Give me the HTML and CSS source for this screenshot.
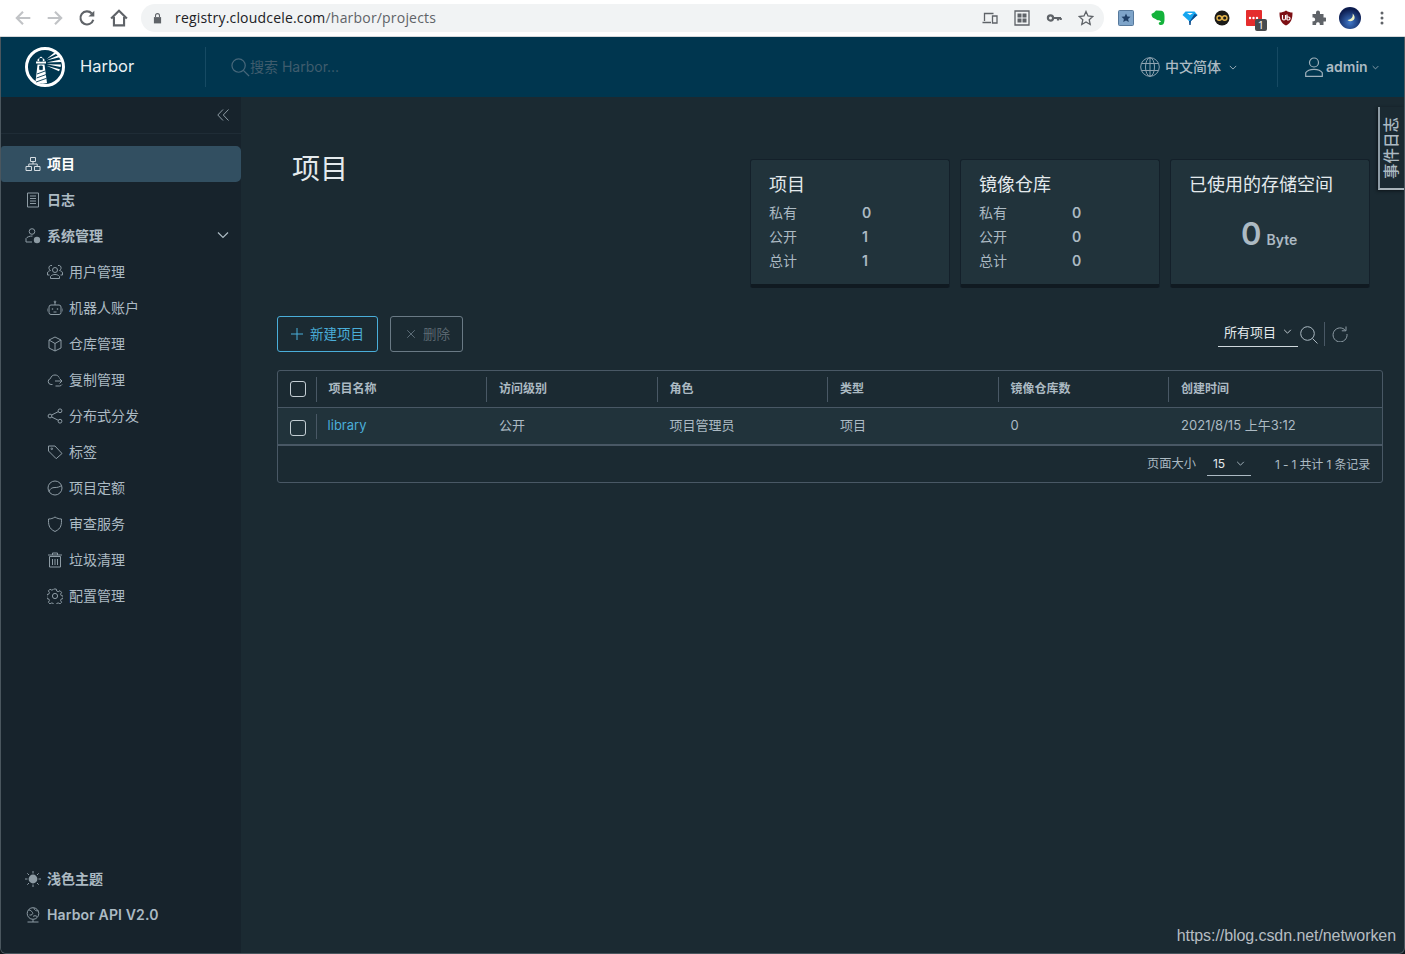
FILE: index.html
```html
<!DOCTYPE html>
<html lang="zh-CN">
<head>
<meta charset="utf-8">
<title>Harbor</title>
<link rel="stylesheet" href="styles.css">
</head>
<body>
<div class="chrome">
  <div class="chrome-nav">
    <svg class="cicon off" viewBox="0 0 16 16"><path d="M14.500 8H2.500M8 2.500 2.500 8 8 13.500"/></svg>
    <svg class="cicon off" viewBox="0 0 16 16"><path d="M1.500 8h12M8 2.500 13.500 8 8 13.500"/></svg>
    <svg class="cicon" viewBox="0 0 16 16"><path d="M13.600 9.500A5.800 5.800 0 1 1 12.300 4"/><path class="solid" d="M14.500 1.500v5.200H9.300z"/></svg>
    <svg class="cicon" viewBox="0 0 16 16"><path d="M1 8.500 8 1.500l7 7M3.500 7v7.500h9V7"/></svg>
  </div>
  <div class="omnibox">
    <svg class="lock" viewBox="0 0 10 12"><path d="M1 5h8v7H1z"/><path class="ring" d="M2.800 5V3.300a2.200 2.200 0 0 1 4.400 0V5"/></svg>
    <span class="url"><b>registry.cloudcele.com</b>/harbor/projects</span>
    <div class="omni-actions">
      <svg class="oicon" viewBox="0 0 16 16"><path d="M2.500 11V3.500h9M.5 12.500h8.500M10.500 6h4.500v7h-4.500z"/></svg>
      <svg class="oicon" viewBox="0 0 16 16"><path d="M1 1h14v14H1z"/><path class="solid" d="M3.500 3.500h4v4h-4zM8.500 3.500h4v4h-4zM3.500 8.500h4v4h-4zM8.500 8.500h4v4h-4z"/></svg>
      <svg class="oicon" viewBox="0 0 16 16"><circle class="key" cx="4.500" cy="8" r="2.600"/><path class="thick" d="M7 8h8M12 8v2.500M14.700 8v2"/></svg>
      <svg class="oicon" viewBox="0 0 16 16"><path d="m8 1.500 2 4.500 4.800.5-3.600 3.200 1 4.800L8 12l-4.200 2.500 1-4.800L1.200 6.500 6 6z"/></svg>
    </div>
  </div>
  <div class="extensions">
    <svg class="ext" viewBox="0 0 16 16"><rect class="e-blue" x=".5" y=".5" width="15" height="15" rx="1"/><path class="e-star" d="m8 3.500 1.300 3 3.200.3-2.400 2.100.7 3.100L8 10.400 5.200 12l.7-3.100L3.500 6.800l3.200-.3z"/></svg>
    <svg class="ext" viewBox="0 0 16 16"><path class="e-green" d="M4.500 2 6 .5l5.500.3c2.500.7 3 3 3 5.700 0 2.500.3 5.500-1 7.500-1.200 1.300-3.500 1.500-4.500.2-.8-1.300.3-2.500 2-2 0-1.500-1.500-2-3-2-1.500-.3-2.500-1.500-4-2-1.500-.5-2.500-2.500-2.500-4 0-.5 1-1 3-2zm3.500 3.500c1 0 1.500.5 2 1.500-1 0-1.500-.5-2-1.500z"/></svg>
    <svg class="ext" viewBox="0 0 16 16"><path class="e-sky" d="M3.500 1.500h9L15.500 5 9 11H7L.5 5z"/><path class="e-navy" d="M7 11h2l-.3 4h-1.400zM9 11l6.500-6-3-1L8 11z"/><path class="e-white" d="M5 3h6L8 5z"/></svg>
    <svg class="ext" viewBox="0 0 16 16"><circle class="e-dark" cx="8" cy="8" r="7.500"/><circle class="e-loop" cx="5.300" cy="8" r="2.300"/><circle class="e-loop" cx="10.700" cy="8" r="2.300"/></svg>
    <span class="ext-badge-wrap">
      <svg class="ext" viewBox="0 0 16 16"><rect class="e-red" width="16" height="16" rx="1"/><circle class="e-white" cx="4" cy="8" r="1.200"/><circle class="e-white" cx="7.500" cy="8" r="1.200"/><circle class="e-white" cx="11" cy="8" r="1.200"/></svg>
      <span class="badge">1</span>
    </span>
    <svg class="ext" viewBox="0 0 16 16"><path class="e-shield" d="M8 .5c2 1.500 4.500 2 6.500 2 0 6-1 10.500-6.500 13C2.500 13 1.500 8.500 1.500 2.500c2 0 4.500-.5 6.500-2z"/><path class="e-ub" d="M4.500 5v3.500a1.500 1.500 0 0 0 3 0V5M9 4.500v5.500M9 7h1.500a1.500 1.500 0 0 1 0 3H9"/></svg>
    <svg class="ext" viewBox="0 0 16 16"><path class="e-puzzle" d="M6 2.500a2 2 0 0 1 4 0V4h3.500v3.500H15a2 2 0 0 1 0 4h-1.500V15H9.800v-1.200a1.900 1.900 0 0 0-3.700 0V15H2.500v-3.700h1.200a1.900 1.900 0 0 0 0-3.700H2.500V4H6z"/></svg>
    <svg class="avatar" viewBox="0 0 22 22"><defs><radialGradient id="night" cx=".5" cy=".7" r=".6"><stop offset="0" stop-color="#3f78c9"/><stop offset="1" stop-color="#0c1c4f"/></radialGradient></defs><circle cx="11" cy="11" r="11" fill="url(#night)"/><path class="e-moon" d="M13.500 6.500c1 3-1 6-5 6.500 2 2 6 1.500 7-1.500.5-2-.5-4-2-5z"/></svg>
    <svg class="dots" viewBox="0 0 4 16"><circle cx="2" cy="3" r="1.500"/><circle cx="2" cy="8" r="1.500"/><circle cx="2" cy="13" r="1.500"/></svg>
  </div>
</div>

<div class="app">
  <header class="top">
    <div class="brand">
      <svg class="logo" viewBox="0 0 40 40">
        <circle class="logo-ring" cx="20" cy="20" r="18.500"/>
        <path class="logo-fill" d="M12.500 12.500 16 9.500l3.500 3v1.500h-7zM11 14.500h10v2H11zM12.500 17.500h7L22 36c-3 1-8 1-11.500-1z"/>
        <path class="logo-cut" d="M14.700 11.500h2.600v2.500h-2.600zM14.700 19h2.600v3.600h-2.600zM12 27l8.700-3.200M11.500 31l9.700-3.500M11 35l10.500-3.700"/>
        <path class="logo-fill" d="M21.500 12 29.500 5.500l2 1.200zM21.500 13.500l11.800-5.200 1.300 2zM21.500 15.500l14-3 .6 2.400zM21.500 17.200l14.400.4-.3 2.500zM21.500 18.800l13.400 3.400-.9 2z"/>
      </svg>
      <span class="brand-name">Harbor</span>
    </div>
    <div class="search">
      <svg class="search-icon" viewBox="0 0 20 20"><circle cx="8" cy="8" r="7"/><path d="m13 13 6 6"/></svg>
      <span class="search-text">搜索 Harbor...</span>
    </div>
    <div class="lang">
      <svg class="globe" viewBox="0 0 20 20"><circle cx="10" cy="10" r="9.300"/><ellipse cx="10" cy="10" rx="4.500" ry="9.300"/><path d="M10 .7v18.600M1.500 6.500h17M1.500 13.500h17"/></svg>
      <span>中文简体</span>
      <svg class="caret" viewBox="0 0 10 6"><path d="m1 1 4 4 4-4"/></svg>
    </div>
    <div class="user">
      <svg class="user-icon" viewBox="0 0 18 20"><circle cx="9" cy="5.500" r="4.500"/><path d="M.7 19.300v-3.500c1.500-2.500 5-3.500 8.300-3.500s6.800 1 8.300 3.500v3.500z"/></svg>
      <span>admin</span>
      <svg class="caret small" viewBox="0 0 10 6"><path d="m1 1 4 4 4-4"/></svg>
    </div>
  </header>

  <div class="main">
    <aside class="side">
      <div class="collapse">
        <svg class="collapse-icon" viewBox="0 0 12 12"><path d="M6 .5.8 6 6 11.500M11.500.5 6.300 6l5.200 5.500"/></svg>
      </div>
      <nav class="nav">
        <a class="item top-item active"><svg class="ni" viewBox="0 0 16 16"><path d="M5.500 1.500h5v4h-5zM1 10.500h5.500v4H1zM9.500 10.500H15v4H9.500zM8 5.500V8M3.800 10.500V8h8.400v2.500"/></svg>项目</a>
        <a class="item top-item"><svg class="ni" viewBox="0 0 16 16"><path d="M2.500 1h11v14h-11zM5 4h6M5 6.500h6M5 9h6M5 11.500h6"/></svg>日志</a>
        <a class="item top-item"><svg class="ni" viewBox="0 0 16 16"><circle cx="7" cy="3.500" r="2.800"/><path d="M7.500 8C4.500 8 2 9 1 10.500v3.500h6"/><circle class="solid" cx="12" cy="12" r="3.200"/></svg>系统管理<svg class="chev" viewBox="0 0 12 8"><path d="m1 1.500 5 5 5-5"/></svg></a>
        <a class="item sub-item"><svg class="ni" viewBox="0 0 16 16"><circle cx="8" cy="6" r="2.500"/><path d="M3.500 14.500v-2c1-1.500 3-2 4.500-2s3.500.5 4.500 2v2zM5 1.500c-2-.5-3.500 1-3 3 .1 1 .8 1.500 1.500 2-1.500.5-3 1-3 2.500v2h2M11 1.500c2-.5 3.500 1 3 3-.1 1-.8 1.500-1.500 2 1.500.5 3 1 3 2.500v2h-2"/></svg>用户管理</a>
        <a class="item sub-item"><svg class="ni" viewBox="0 0 16 16"><rect x="2" y="5" width="12" height="9.500" rx="2"/><path d="M8 5V2.500M0 8.500v3M16 8.500v3M6.500 12h3"/><circle cx="8" cy="1.800" r=".8"/><circle class="solid" cx="5.500" cy="9" r=".8"/><circle class="solid" cx="10.500" cy="9" r=".8"/></svg>机器人账户</a>
        <a class="item sub-item"><svg class="ni" viewBox="0 0 16 16"><path d="m8 1 6 3v8l-6 3-6-3V4zM2 4l6 3.500L14 4M8 7.500V15"/></svg>仓库管理</a>
        <a class="item sub-item"><svg class="ni" viewBox="0 0 16 16"><path d="M5.500 12.500H4A3 3 0 0 1 3.500 6.600C4 4 6 3 8 3c2 0 3.500 1 4.200 2.600M8 9h7M12.500 6.500 15 9l-2.500 2.500M15 12.500a3 3 0 0 1-2.500 1.500H8.500"/></svg>复制管理</a>
        <a class="item sub-item"><svg class="ni" viewBox="0 0 16 16"><circle cx="13" cy="2.800" r="1.900"/><circle cx="3" cy="8" r="1.900"/><circle cx="13" cy="13.200" r="1.900"/><path d="m4.700 7 6.600-3.400M4.700 9l6.600 3.300"/></svg>分布式分发</a>
        <a class="item sub-item"><svg class="ni" viewBox="0 0 16 16"><path d="M1.500 2h6.500l7 7.500-5.800 5.200L1.500 7z"/><circle cx="4.800" cy="4.800" r=".8"/></svg>标签</a>
        <a class="item sub-item"><svg class="ni" viewBox="0 0 16 16"><circle cx="8" cy="8" r="7"/><path d="M2 11.800C3 8.500 5 7.500 8 7.500c2.500 0 4.500-.5 6.500-2"/></svg>项目定额</a>
        <a class="item sub-item"><svg class="ni" viewBox="0 0 16 16"><path d="M8 1c2 1.300 4 2 6.500 2 0 5 .2 9.500-6.500 12.500C1.300 12.500 1.500 8 1.500 3 4 3 6 2.300 8 1z"/></svg>审查服务</a>
        <a class="item sub-item"><svg class="ni" viewBox="0 0 16 16"><path d="M2.500 4.500h11V15h-11zM1 3h14M5.500 3V1h5v2M5.500 7v6M8 7v6M10.500 7v6"/></svg>垃圾清理</a>
        <a class="item sub-item"><svg class="ni" viewBox="0 0 16 16"><circle cx="8" cy="8" r="2.600"/><path d="M6.800 1h2.400l.5 2 1.500.7 1.800-1 1.600 1.700-1 1.700.6 1.500 2 .5v2.400l-2 .5-.6 1.500 1 1.800-1.600 1.600-1.800-1-1.500.6-.5 2H6.800l-.5-2-1.500-.6-1.800 1-1.600-1.600 1-1.800-.6-1.500-2-.5V6.600l2-.5.6-1.500-1-1.700L3 1.200l1.800 1 1.500-.7z"/></svg>配置管理</a>
      </nav>
      <div class="side-foot">
        <a class="item top-item"><svg class="ni sun" viewBox="0 0 16 16"><circle class="solid" cx="8" cy="8" r="4.400"/><path d="M8 0v2.500M8 13.500V16M0 8h2.500M13.500 8H16M2.300 2.300 4 4M12 12l1.700 1.700M2.300 13.700 4 12M12 4l1.700-1.700"/></svg>浅色主题</a>
        <a class="item top-item api"><svg class="ni" viewBox="0 0 16 16"><circle cx="8" cy="6.500" r="5.800"/><path d="M3.500 3c2 0 3 1 4 2.500s-1 3-3 2.500M9 1.200C9 3 11 4 13.500 4M8 9.500c1-1 3-1 4 0M2.500 15h11M8 12.500V15"/></svg>Harbor API V2.0</a>
      </div>
    </aside>

    <main class="content">
      <section class="summary">
        <h1 class="page-title">项目</h1>
        <div class="cards">
          <div class="card">
            <h2>项目</h2>
            <dl class="stats"><dt>私有</dt><dd>0</dd><dt>公开</dt><dd>1</dd><dt>总计</dt><dd>1</dd></dl>
          </div>
          <div class="card">
            <h2>镜像仓库</h2>
            <dl class="stats"><dt>私有</dt><dd>0</dd><dt>公开</dt><dd>0</dd><dt>总计</dt><dd>0</dd></dl>
          </div>
          <div class="card">
            <h2>已使用的存储空间</h2>
            <div class="storage"><span class="num">0</span><span class="unit">Byte</span></div>
          </div>
        </div>
      </section>

      <section class="toolbar">
        <button class="btn primary"><svg class="bi" viewBox="0 0 12 12"><path d="M6 0v12M0 6h12"/></svg>新建项目</button>
        <button class="btn muted"><svg class="bi" viewBox="0 0 12 12"><path d="m1.500 1.500 9 9M10.500 1.500l-9 9"/></svg>删除</button>
        <div class="tools">
          <div class="filter">所有项目<svg class="caret small light" viewBox="0 0 10 6"><path d="m1 1 4 4 4-4"/></svg></div>
          <svg class="tool-search" viewBox="0 0 18 18"><circle cx="7.500" cy="7.500" r="6.800"/><path d="m12.500 12.500 5 5"/></svg>
          <span class="tool-sep"></span>
          <svg class="tool-refresh" viewBox="0 0 16 16"><path d="M13.500 4.500A7 7 0 1 0 15 8"/><path d="M14 .5v4.300H9.800"/></svg>
        </div>
      </section>

      <section class="table">
        <div class="row head">
          <div class="cell check"><span class="box"></span></div>
          <div class="cell">项目名称</div>
          <div class="cell">访问级别</div>
          <div class="cell">角色</div>
          <div class="cell">类型</div>
          <div class="cell">镜像仓库数</div>
          <div class="cell">创建时间</div>
        </div>
        <div class="row body-row">
          <div class="cell check"><span class="box low"></span></div>
          <div class="cell link latin">library</div>
          <div class="cell">公开</div>
          <div class="cell">项目管理员</div>
          <div class="cell">项目</div>
          <div class="cell latin">0</div>
          <div class="cell">2021/8/15 上午3:12</div>
        </div>
        <div class="table-foot">
          <span class="page-label">页面大小</span>
          <span class="page-size"><b>15</b><svg class="caret small" viewBox="0 0 10 6"><path d="m1 1 4 4 4-4"/></svg></span>
          <span class="total">1 - 1 共计 1 条记录</span>
        </div>
      </section>
    </main>
  </div>
  <div class="event-tab"><span>事件日志</span></div>
  <div class="watermark">https://blog.csdn.net/networken</div>
</div>
</body>
</html>
```
FILE: styles.css
```css
* { box-sizing: border-box; }
html, body { margin: 0; height: 954px; overflow: hidden; background: #10181d; }
body {
  font-family: Inter, "Noto Sans CJK SC", "Noto Sans", sans-serif;
  font-size: 14px;
  color: #acbac3;
  display: flex;
  flex-direction: column;
}
svg { fill: none; stroke: currentColor; stroke-width: 1; flex: none; }
svg .solid { fill: currentColor; stroke: none; }

/* browser chrome */
.chrome { height: 37px; flex: none; display: flex; align-items: center; background: #fff; border-bottom: 1px solid #d6d8da; padding: 0 0 1px 14px; }
.chrome-nav { display: flex; gap: 14px; width: 127px; padding-left: 0; color: #5f6368; }
.cicon { width: 18px; height: 18px; stroke-width: 1.900; }
.cicon.off { color: #c1c3c6; }
.omnibox { width: 963px; height: 28px; border-radius: 14px; background: #f1f3f4; display: flex; align-items: center; padding-left: 12px; color: #5f6368; font-family: "Open Sans", sans-serif; font-size: 14px; }
.lock { width: 9px; height: 12px; margin-right: 13px; fill: #5f6368; stroke: none; }
.lock .ring { fill: none; stroke: #5f6368; stroke-width: 1.200; }
.url { letter-spacing: .19px; }
.url b { font-weight: 400; color: #202124; }
.omni-actions { margin-left: auto; display: flex; gap: 16px; padding-right: 10px; color: #5f6368; }
.oicon { width: 16px; height: 16px; stroke-width: 1.300; }
.oicon .thick { stroke-width: 2.200; }
.oicon .key { stroke-width: 2.200; }
.extensions { display: flex; align-items: center; gap: 16px; padding-left: 14px; }
.ext { width: 16px; height: 16px; stroke: none; display: block; }
.ext-badge-wrap { position: relative; display: block; width: 16px; height: 16px; }
.badge { position: absolute; left: 9px; top: 9px; width: 12px; height: 12px; background: #474b4f; color: #fff; border-radius: 2px; font: 400 11px/12px "Open Sans", sans-serif; text-align: center; }
.e-blue { fill: #7ea4c9; stroke: #57799c; }
.e-star { fill: #1f3f66; }
.e-green { fill: #14b23b; }
.e-sky { fill: #15a6f0; }
.e-navy { fill: #0d4d8f; }
.e-dark { fill: #1b1a17; }
.e-loop { stroke: #e3b44b; stroke-width: 1.400; fill: none; }
.e-red { fill: #e52d2d; }
.e-white { fill: #fff; }
.e-shield { fill: #7d0f14; }
.e-ub { stroke: #fff; stroke-width: 1.200; fill: none; }
.e-puzzle { fill: #5f6368; }
.e-moon { fill: #eef1c4; stroke: none; }
.avatar { width: 22px; height: 22px; stroke: none; margin-left: -3px; }
.dots { width: 4px; height: 16px; fill: #5f6368; stroke: none; margin-left: 3px; }

/* app frame */
.app { flex: 1; min-height: 0; display: flex; flex-direction: column; position: relative; border: solid #4a565e; border-width: 0 1px 1px; border-radius: 0 0 6px 6px; overflow: hidden; background: #1b2a32; }
.top { height: 60px; flex: none; background: #00364f; display: flex; align-items: center; color: #acbac3; }
.brand { width: 204px; height: 40px; display: flex; align-items: center; padding-left: 24px; }
.logo { width: 40px; height: 40px; stroke: none; }
.logo-ring { stroke: #fff; stroke-width: 3; fill: none; }
.logo-fill { fill: #fff; }
.logo-cut { fill: #00364f; stroke: #00364f; stroke-width: .9; }
.brand-name { margin-left: 15px; color: #eaf0f3; font-size: 16.500px; font-weight: 400; padding-bottom: 2px; }
.search { height: 40px; flex: 1; display: flex; align-items: center; border-left: 1px solid #164a63; padding-left: 25px; color: #46677a; }
.search-icon { width: 19px; height: 19px; stroke-width: 1.300; }
.search-text { font-size: 14px; color: #3f5c6d; padding-bottom: 2px; }
.lang { display: flex; align-items: center; width: 137px; font-weight: 500; font-size: 14px; }
.lang span, .user span { padding-bottom: 2px; }
.globe { width: 20px; height: 20px; margin-right: 5px; color: #8ea3b0; }
.caret { width: 8px; height: 5px; margin-left: 8px; color: #acbac3; stroke-width: 1.100; }
.caret.small { width: 7px; height: 5px; margin-left: 4px; }
.caret.light { color: #cfd8dd; margin-left: 7px; width: 9px; }
.user { height: 40px; width: 127px; display: flex; align-items: center; border-left: 1px solid #164a63; padding-left: 27px; font-size: 14px; font-weight: 600; }
.user-icon { width: 18px; height: 20px; margin-right: 3px; color: #9eb0bb; stroke-width: 1.200; }

/* sidebar */
.main { flex: 1; min-height: 0; display: flex; }
.side { width: 240px; flex: none; background: #17232c; display: flex; flex-direction: column; padding-bottom: 20px; }
.collapse { height: 37px; flex: none; border-bottom: 1px solid #1f2c36; display: flex; align-items: center; justify-content: flex-end; padding: 0 12px 0 0; color: #8d9ba4; }
.collapse-icon { width: 12px; height: 12px; }
.nav { margin-top: 12px; display: flex; flex-direction: column; }
.item { height: 36px; display: flex; align-items: center; color: #acbac3; white-space: nowrap; font-size: 14px; padding-bottom: 2px; }
.item .ni { margin-top: 2px; }
.top-item { padding-left: 24px; font-weight: 600; }
.sub-item { padding-left: 46px; font-weight: 400; }
.api { letter-spacing: .14px; }
.active { background: #324f61; color: #fff; border-radius: 3px 5px 5px 3px; }
.ni { width: 16px; height: 16px; margin-right: 6px; color: #8d9ba4; }
.active .ni { color: #d5dde2; }
.chev { width: 12px; height: 8px; margin-left: auto; margin-right: 12px; color: #acbac3; stroke-width: 1.200; }
.side-foot { margin-top: auto; display: flex; flex-direction: column; }

/* content */
.content { flex: 1; min-width: 0; padding: 62px 21px 0 36px; }
.summary { display: flex; justify-content: space-between; align-items: flex-start; height: 129px; }
.page-title { margin: -9px 0 0 15px; font-size: 28px; line-height: 38px; font-weight: 400; color: #e4eaed; }
.cards { display: flex; gap: 10px; margin-right: 13px; }
.card { width: 200px; height: 129px; padding: 12px 18px 0; background: #21333b; border: 1px solid #14202a; border-bottom: 4px solid #101a21; border-radius: 3px; }
.card h2 { margin: 0 0 2px; font-size: 18px; line-height: 26px; font-weight: 400; color: #e4eaed; }
.stats { margin: 0; display: grid; grid-template-columns: 93px 1fr; grid-auto-rows: 24px; align-items: center; }
.stats dt { font-size: 14px; }
.stats dd { margin: 0; font-size: 14px; font-weight: 600; }
.storage { margin-top: 16px; padding-left: 52px; display: flex; align-items: baseline; gap: 5px; font-weight: 600; }
.num { font-size: 31px; line-height: 40px; }
.unit { font-size: 14px; }

.toolbar { margin-top: 28px; height: 36px; display: flex; align-items: center; gap: 12px; }
.btn { height: 36px; display: flex; align-items: center; background: none; border: 1px solid; border-radius: 3px; font-family: inherit; font-size: 13.500px; padding: 0 13px 2px; }
.btn .bi { margin-top: 2px; }
.primary { color: #4aaed9; border-color: #4aaed9; }
.muted { color: #59666f; border-color: #6a7a85; padding: 0 12px 2px 15px; }
.bi { width: 12px; height: 12px; margin-right: 7px; }
.muted .bi { width: 10px; height: 10px; margin-right: 7px; color: #6a7a85; }
.tools { margin-left: auto; display: flex; align-items: center; padding-right: 35px; }
.filter { height: 28px; width: 80px; border-bottom: 1px solid #cfd8dd; padding: 0 0 3px 6px; display: flex; align-items: center; font-size: 13px; color: #e4eaed; margin-top: -2px; }
.tool-search { width: 18px; height: 18px; margin-left: 2px; color: #acbac3; margin-top: 1px; }
.tool-sep { width: 1px; height: 24px; background: #495865; margin: 0 7px 0 6px; }
.tool-refresh { width: 16px; height: 16px; color: #8d9ba4; }

.table { margin-top: 18px; height: 113px; border: 1px solid #495865; border-radius: 3px; display: flex; flex-direction: column; }
.row { display: grid; grid-template-columns: 37.600px 170.500px 170.500px 170.500px 170.500px 170.500px 1fr; flex: none; }
.head { height: 36px; align-items: center; font-size: 12px; font-weight: 600; }
.body-row { height: 39px; align-items: center; background: #21333b; border-top: 1px solid #495865; border-bottom: 2px solid #495865; font-size: 13px; }
.cell { height: 25px; display: flex; align-items: center; padding-left: 12px; border-left: 1px solid #495865; white-space: nowrap; }
.head .cell { padding-bottom: 4px; }
.body-row .cell { border-left-color: transparent; padding-bottom: 4px; }
.body-row .cell.latin { padding-bottom: 2px; }
.body-row .cell.link { border-left-color: #495865; padding-left: 11px; }
.cell.check { border-left: 0; padding: 0 0 0 12px; }
.head .cell.check, .body-row .cell.check { padding-bottom: 0; }
.box { width: 16px; height: 16px; border: 1px solid #c4ced4; border-radius: 3px; display: block; }
.box.low { margin-top: 3px; }
.link { color: #4aaed9; }
.table-foot { flex: 1; display: flex; align-items: center; justify-content: flex-end; padding: 0 12px 2px 0; font-size: 12px; }
.page-label { font-size: 12.250px; }
.total { letter-spacing: -.14px; }
.page-size { width: 44px; height: 26px; margin: 0 24px 0 11px; border-bottom: 1px solid #acbac3; display: flex; align-items: center; padding: 2px 0 0 6px; }
.page-size b { font-weight: 400; color: #e4eaed; }
.page-size .caret { margin-left: 11px; width: 9px; }

.event-tab { position: absolute; right: 0; top: 70px; width: 26px; height: 83px; background: #1b2a32; border-left: 2px solid #8d9ba4; border-bottom: 2px solid #a9b4ba; box-shadow: -1px 1px 3px #0d1419; display: flex; align-items: center; justify-content: center; }
.event-tab span { display: block; transform: rotate(-90deg); white-space: nowrap; font-size: 15.500px; font-weight: 500; line-height: 18px; color: #acbac3; }
.watermark { position: absolute; right: 8px; bottom: 8px; font-family: "Liberation Sans", sans-serif; font-size: 16px; letter-spacing: -.07px; color: #b6bdc2; }
```
